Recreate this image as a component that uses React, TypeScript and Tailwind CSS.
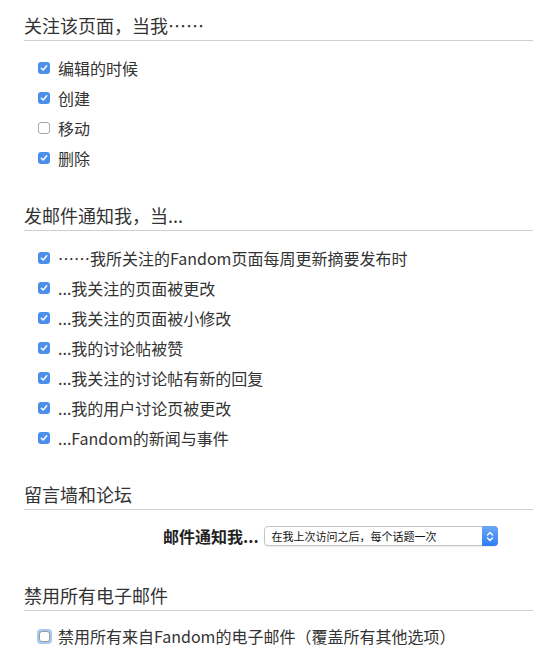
import type { ReactNode } from 'react'

const font = { fontFamily: '"Noto Sans CJK SC", "Noto Sans", sans-serif' }

function Box({ checked, focus }: { checked: boolean; focus?: boolean }) {
  if (focus) {
    return (
      <span className="flex h-[15px] w-[15px] shrink-0 items-center justify-center rounded-[4px] bg-[#a9c8f3]">
        <span className="h-[11px] w-[11px] rounded-[3px] border border-[#9a9a9a] bg-white" />
      </span>
    )
  }
  if (!checked) {
    return <span className="h-[12px] w-[12px] shrink-0 rounded-[3px] border border-[#a8a8a8] bg-white" />
  }
  return (
    <span className="flex h-[12px] w-[12px] shrink-0 items-center justify-center rounded-[3px] bg-[#4c8fea]">
      <svg width="8" height="8" viewBox="0 0 8 8" fill="none">
        <path d="M1.3 4.2 L3.2 6 L6.7 1.8" stroke="white" strokeWidth="1.5" strokeLinecap="round" strokeLinejoin="round" />
      </svg>
    </span>
  )
}

function Row({ checked, children }: { checked: boolean; children: ReactNode }) {
  return (
    <label className="flex h-[30px] items-center gap-[8px] pl-[38px] text-[16px] leading-[20px] text-[#333]">
      <Box checked={checked} />
      <span>{children}</span>
    </label>
  )
}

function Heading({ children }: { children: ReactNode }) {
  return (
    <h2 className="ml-6 border-b border-[#cfcfcf] pb-[4px] text-[18px] leading-[22px] text-[#333]">
      {children}
    </h2>
  )
}

export default function App() {
  return (
    <div style={font} className="min-h-[666px] w-[533px] bg-white pt-[14px]">
      <Heading>关注该页面，当我……</Heading>
      <div className="mt-[12px] mb-[31px]">
        <Row checked>编辑的时候</Row>
        <Row checked>创建</Row>
        <Row checked={false}>移动</Row>
        <Row checked>删除</Row>
      </div>

      <Heading>发邮件通知我，当...</Heading>
      <div className="mt-[12px] mb-[30px]">
        <Row checked>……我所关注的Fandom页面每周更新摘要发布时</Row>
        <Row checked>...我关注的页面被更改</Row>
        <Row checked>...我关注的页面被小修改</Row>
        <Row checked>...我的讨论帖被赞</Row>
        <Row checked>...我关注的讨论帖有新的回复</Row>
        <Row checked>...我的用户讨论页被更改</Row>
        <Row checked>...Fandom的新闻与事件</Row>
      </div>

      <Heading>留言墙和论坛</Heading>
      <div className="mt-[16px] mb-[38px] flex h-[20px] items-center gap-[5px] pl-[163px]">
        <span className="text-[16px] leading-[20px] font-bold text-[#222]">邮件通知我...</span>
        <div className="flex h-[20px] w-[234px] items-center rounded-[4px] border border-[#c4c4c4] bg-white shadow-[0_1px_1px_rgba(0,0,0,0.08)]">
          <span className="flex-1 pl-[7px] text-[11px] leading-[14px] text-[#111]">在我上次访问之后，每个话题一次</span>
          <span className="-mr-px flex h-[20px] w-[16px] items-center justify-center rounded-r-[4px] bg-gradient-to-b from-[#6aa7f7] to-[#2f7cf3]">
            <svg width="8" height="11" viewBox="0 0 8 11" fill="none">
              <path d="M1.5 4 L4 1.5 L6.5 4 M1.5 7 L4 9.5 L6.5 7" stroke="white" strokeWidth="1.4" strokeLinecap="round" strokeLinejoin="round" />
            </svg>
          </span>
        </div>
      </div>

      <Heading>禁用所有电子邮件</Heading>
      <label className="mt-[10px] flex h-[30px] items-center gap-[6px] pl-[37px] text-[16px] leading-[20px] text-[#333]">
        <Box checked={false} focus />
        <span>禁用所有来自Fandom的电子邮件（覆盖所有其他选项）</span>
      </label>
    </div>
  )
}
